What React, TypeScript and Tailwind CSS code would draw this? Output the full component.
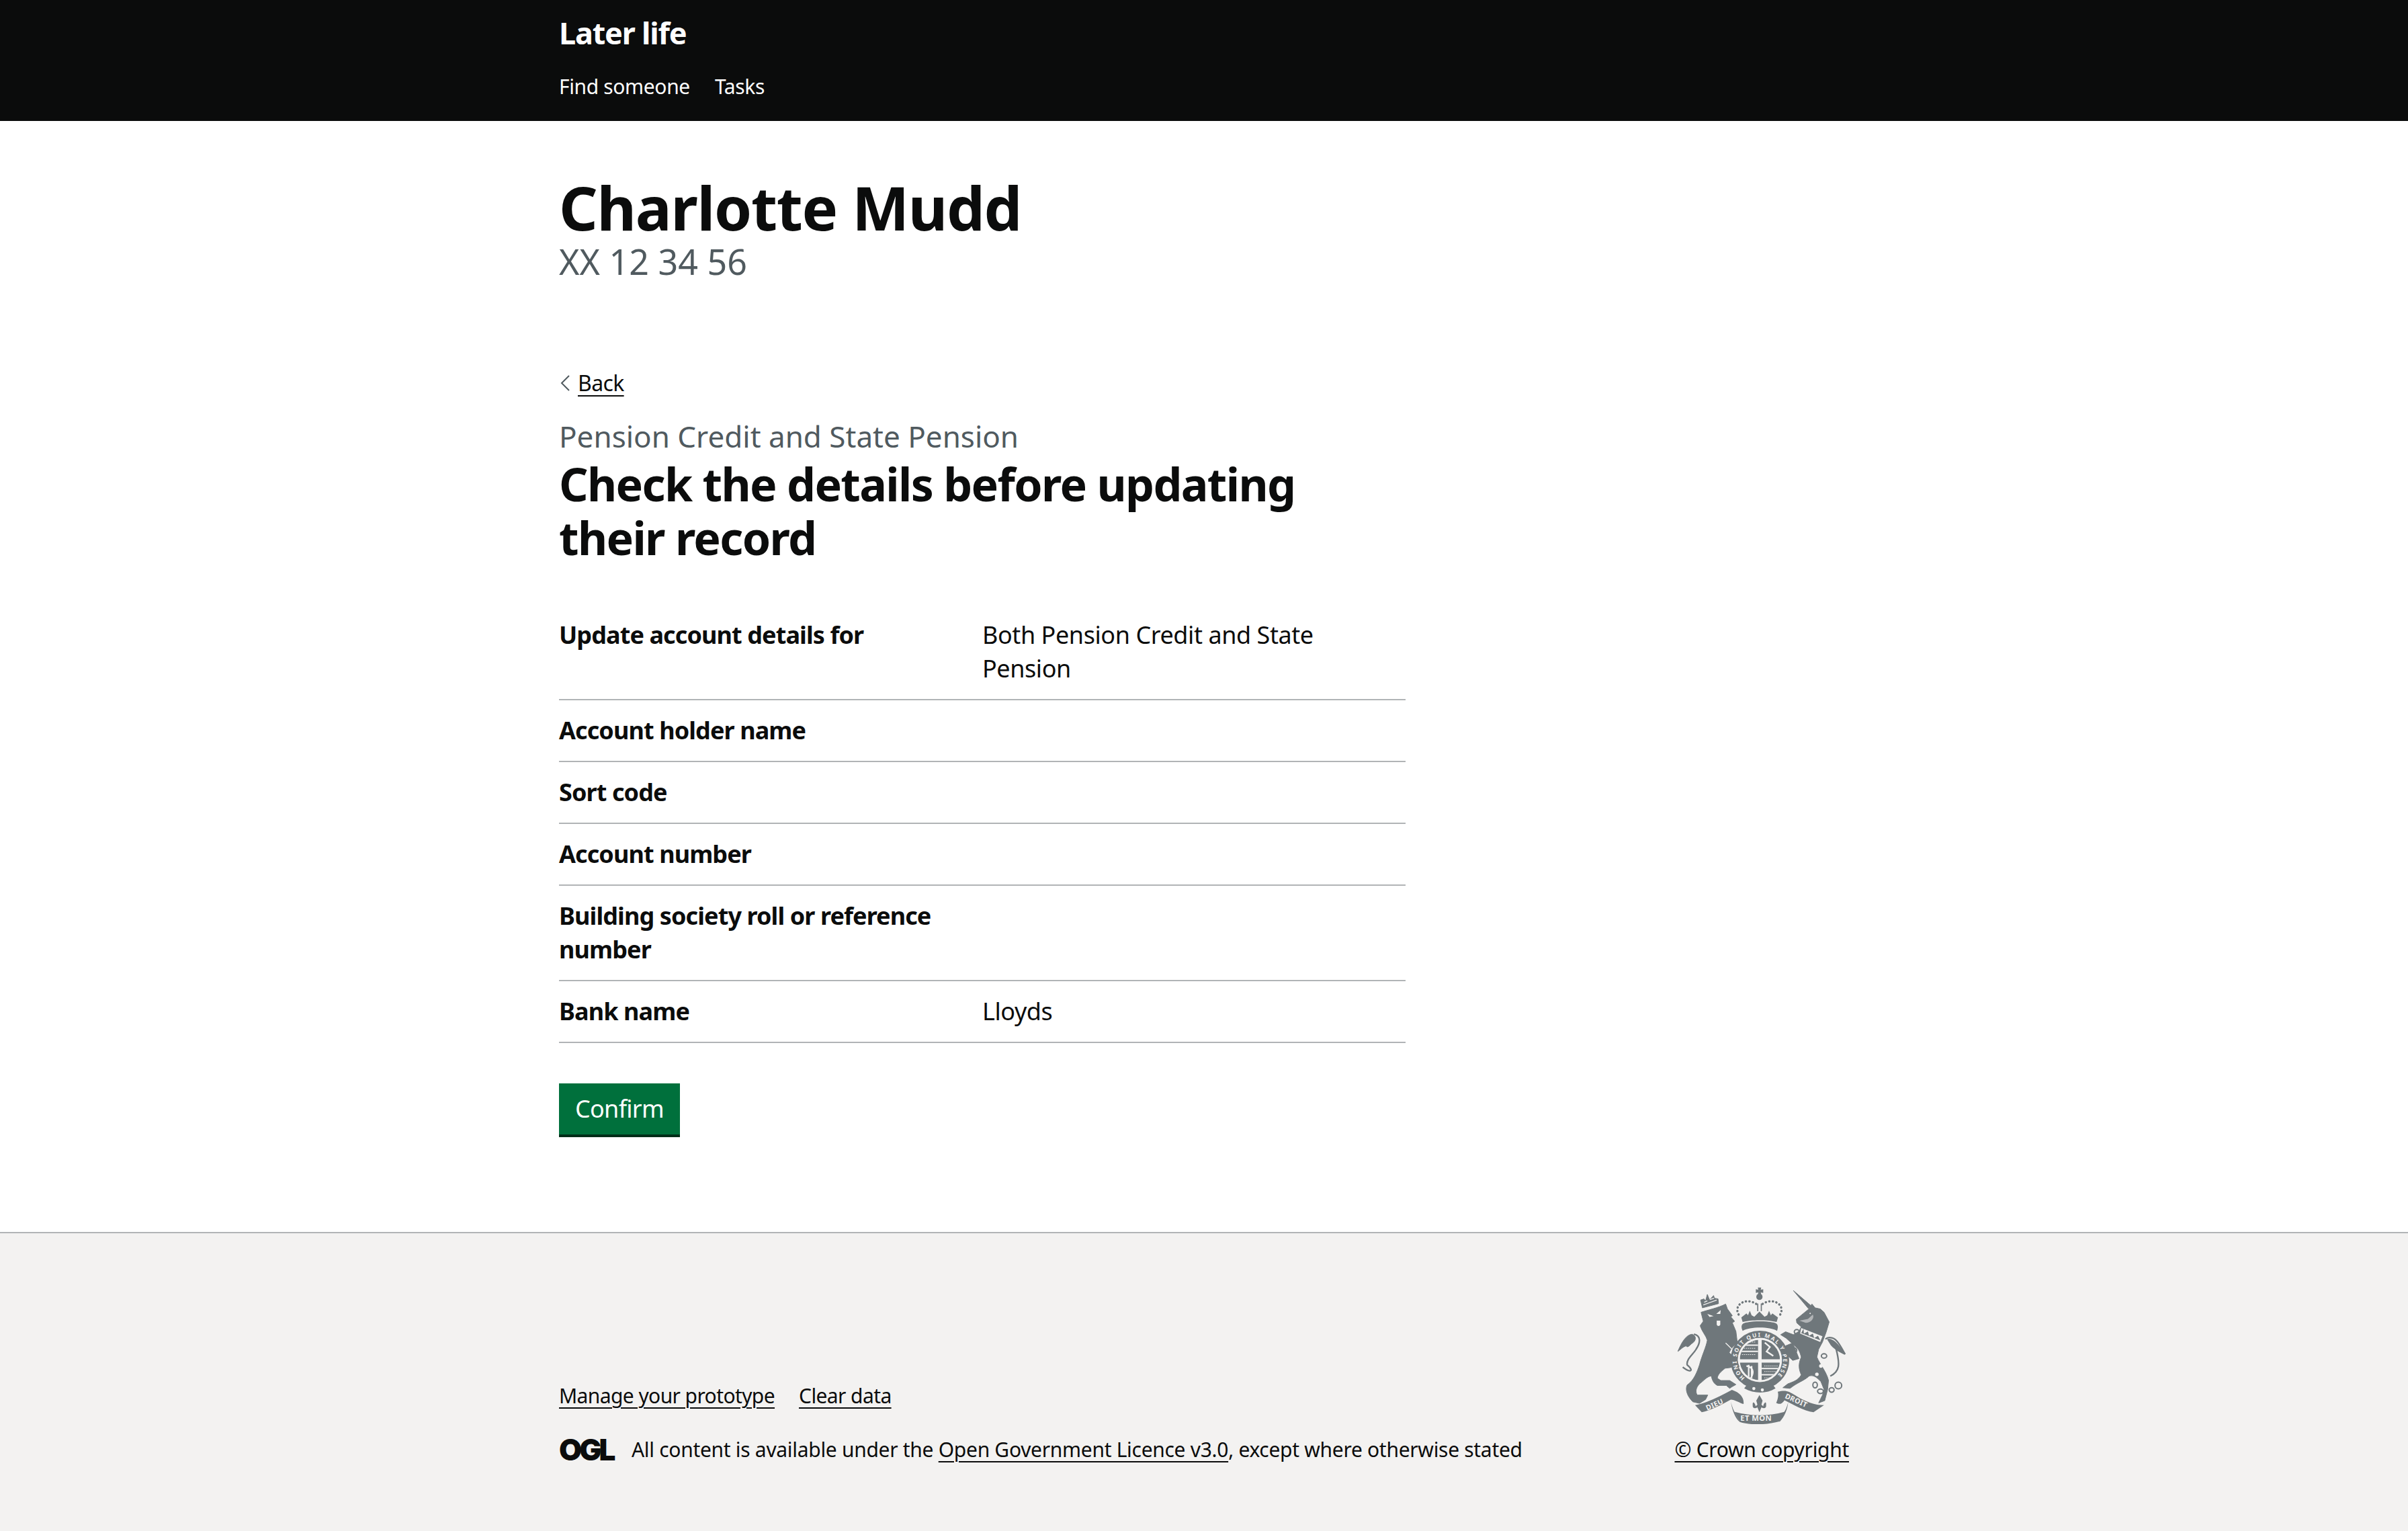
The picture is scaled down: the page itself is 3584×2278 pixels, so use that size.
const rows = [
  { key: "Update account details for", value: "Both Pension Credit and State Pension" },
  { key: "Account holder name", value: "" },
  { key: "Sort code", value: "" },
  { key: "Account number", value: "" },
  { key: "Building society roll or reference number", value: "" },
  { key: "Bank name", value: "Lloyds" },
];

function Crest() {
  const ink = "#6f777b";
  const bg = "#f3f2f1";
  return (
    <svg width="250" height="204" viewBox="108 72 750 613" className="block" fill={ink}>
      {/* lion */}
      <g stroke={ink} strokeWidth="3" strokeLinejoin="round">
        <path d="M212 185 C240 175 290 165 322 148 L330 170 L352 200 L345 205 L362 225 L352 232 L368 270 L374 320 C360 335 345 345 338 365 L350 378 L372 398 L382 428 L362 420 L345 432 L320 435 C300 450 285 465 285 480 L300 490 L340 490 L368 508 L350 518 L340 525 L325 512 L285 512 C270 505 262 490 258 470 C240 470 225 490 205 505 C190 520 185 540 195 555 L242 555 L232 575 L205 592 L175 585 C150 560 140 530 150 510 C180 490 195 450 205 420 C215 380 235 340 240 310 C235 290 215 270 208 245 L222 225 Z" />
        <path d="M172 283 C145 285 125 320 108 360 C125 348 130 340 145 335 C150 345 160 335 170 325 C192 312 192 290 172 283 Z" />
        <path d="M218 165 L210 130 L225 125 L232 135 L240 105 L250 130 L268 110 L272 122 L288 125 L290 146 Z" />
      </g>
      <path d="M130 430 C160 455 185 450 150 420 C145 395 175 375 190 350 C210 320 212 290 180 283" fill="none" stroke={ink} strokeWidth="7" />
      <path d="M240 192 L268 202 L250 206 Z M280 192 L300 175 L298 192 Z" fill={bg} />
      <path d="M282 222 L298 222 L298 240 C295 248 285 248 282 240 Z" fill={bg} />
      <path d="M222 152 L282 130 M226 140 L240 134 M252 128 L270 122" stroke={bg} strokeWidth="4" fill="none" />
      <path d="M322 322 L360 360" stroke={bg} strokeWidth="4" />

      {/* royal crown */}
      <g fill="none" stroke={ink} strokeWidth="10" strokeLinecap="round" strokeDasharray="1 15">
        <path d="M380 195 C355 150 415 115 462 150" />
        <path d="M566 195 C591 150 531 115 484 150" />
      </g>
      <path d="M466 74 L481 74 L479 84 L490 82 L490 98 L479 96 L481 105 L466 105 L468 96 L457 98 L457 82 L468 84 Z" />
      <circle cx="473" cy="116" r="14" />
      <rect x="463" y="146" width="5" height="34" />
      <rect x="479" y="146" width="5" height="34" />
      <path d="M392 208 L415 190 L422 198 L430 178 L438 198 L450 205 L473 182 L496 205 L508 198 L516 178 L524 198 L531 190 L556 208 L550 228 C510 218 436 218 398 228 Z" />
      <path d="M398 268 C385 240 400 232 420 230 C450 224 500 224 530 230 C550 232 562 240 552 268 C520 248 430 248 398 268 Z" />

      {/* garter and shield */}
      <circle cx="475" cy="398" r="115" fill="none" stroke={ink} strokeWidth="32" />
      <path id="garter" d="M408 478 A104 104 0 1 1 542 478" fill="none" />
      <text fontFamily="'Noto Sans', sans-serif" fontWeight="700" fontSize="25" fill={bg}>
        <textPath href="#garter" textLength="490">HONI SOIT QUI MAL Y PENSE</textPath>
      </text>
      <clipPath id="shield">
        <circle cx="475" cy="398" r="90" />
      </clipPath>
      <g clipPath="url(#shield)">
        <rect x="385" y="305" width="82" height="90" />
        <rect x="483" y="305" width="82" height="90" />
        <rect x="385" y="410" width="82" height="90" />
        <rect x="483" y="410" width="82" height="90" />
        <path d="M385 332 H467 M385 360 H467 M483 436 H565 M483 464 H565" stroke={bg} strokeWidth="6" />
        <path d="M395 318 H455 M395 346 H455 M395 374 H455 M495 425 H555 M495 450 H555 M495 478 H555" stroke={bg} strokeWidth="3" strokeDasharray="5 4" />
        <path d="M497 320 L520 340 L505 360 L535 380 M415 425 C450 430 450 460 430 485 M425 420 V480 M438 425 V480" fill="none" stroke={bg} strokeWidth="7" />
      </g>
      <path d="M405 525 C450 550 505 550 545 525 L530 505 C500 520 450 520 420 505 Z" />
      <circle cx="448" cy="526" r="7" fill={bg} />
      <circle cx="486" cy="532" r="7" fill={bg} />

      {/* unicorn */}
      <g stroke={ink} strokeWidth="3" strokeLinejoin="round">
        <path d="M625 88 L703 155 L692 168 Z" />
        <path d="M638 216 L660 198 L692 172 L708 148 L722 165 L745 170 L762 185 L785 228 L772 272 L755 318 L738 350 L730 385 C745 420 775 455 782 490 L778 530 L765 580 L738 590 L755 555 L762 530 L748 495 C725 470 710 465 695 470 C675 490 640 500 610 525 L578 522 L600 505 C625 495 645 490 660 465 C650 440 645 420 660 385 C655 365 650 355 642 345 L612 318 L592 300 L568 285 L590 272 L625 285 L650 270 L660 250 L640 232 Z" />
        <path d="M590 335 L622 322 L650 392 L622 400 L590 370 Z" />
      </g>
      <path d="M660 255 L755 292 L745 318 L655 280 Z" fill={bg} />
      <path d="M670 258 L672 280 L690 270 L695 290 L712 280 L718 300 L735 290 L745 310 L660 278 Z" />
      <path d="M768 305 C775 298 785 295 800 300 C820 305 838 340 856 372 C840 362 826 360 815 345 C835 420 832 450 790 470" fill="none" stroke={ink} strokeWidth="7" />
      <path d="M775 305 C800 295 835 335 856 372 C830 362 812 355 792 332 Z" />
      <circle cx="748" cy="425" r="8" fill={bg} />
      <circle cx="730" cy="462" r="8" fill={bg} />
      <circle cx="700" cy="190" r="3" fill={bg} />
      <path d="M652 222 L690 215 L712 195 C720 210 705 232 680 232 Z" fill={bg} opacity="0.5" />
      <g fill="none" stroke={ink} strokeWidth="6">
        <ellipse cx="640" cy="272" rx="11" ry="10" />
        <ellipse cx="628" cy="355" rx="12" ry="11" />
        <ellipse cx="762" cy="380" rx="12" ry="10" />
        <ellipse cx="722" cy="510" rx="10" ry="13" />
        <ellipse cx="746" cy="538" rx="13" ry="10" />
        <ellipse cx="796" cy="532" rx="11" ry="10" />
        <circle cx="826" cy="512" r="15" />
      </g>

      {/* motto ribbon */}
      <path d="M185 600 C240 590 300 560 350 532 C390 545 405 570 402 595 C385 590 362 575 345 575 C300 600 250 625 215 632 Z" />
      <path d="M362 630 C440 650 510 650 585 630 L565 672 C500 690 430 690 385 675 Z" />
      <path d="M345 585 C352 610 358 625 365 635 L385 675 C365 660 352 625 345 585 Z M602 585 C595 615 585 630 580 635 L562 675 C585 655 598 620 602 585 Z" />
      <path d="M555 540 C590 532 600 535 640 560 C680 585 720 600 762 600 L715 632 C670 625 620 595 585 578 C570 600 560 595 548 590 C555 575 560 555 555 540 Z" />
      <text fontFamily="'Noto Sans', sans-serif" fontWeight="700" fontSize="34" fill={bg} x="388" y="671" letterSpacing="1">ET MON</text>
      <text fontFamily="'Noto Sans', sans-serif" fontWeight="700" fontSize="32" fill={bg} transform="rotate(-24 240 624)" x="240" y="624" letterSpacing="1">DIEU</text>
      <text fontFamily="'Noto Sans', sans-serif" fontWeight="700" fontSize="32" fill={bg} transform="rotate(24 585 568)" x="585" y="568" letterSpacing="1">DROIT</text>
      <path d="M473 555 L487 580 L482 598 L490 605 C492 590 505 578 503 600 C505 612 495 618 482 610 L473 632 L464 610 C451 618 441 612 443 600 C441 578 454 590 456 605 L464 598 L459 580 Z" />
    </svg>
  );
}

export default function App() {
  return (
    <div className="flex min-h-screen flex-col bg-white font-['Noto_Sans',sans-serif] text-[#0b0c0c]">
      <header className="h-[180px] bg-[#0b0c0c] text-white">
        <div className="mx-auto w-[1920px] pt-[19px]">
          <div className="text-[45px] font-bold leading-[60px] tracking-[-0.027em]">Later life</div>
          <nav className="mt-[30px] flex gap-[37px] text-[30px] leading-[40px] tracking-[-0.012em]">
            <a>Find someone</a>
            <a>Tasks</a>
          </nav>
        </div>
      </header>

      <main className="mx-auto w-[1920px] grow pb-[140px]">
        <div className="pt-[83px]">
          <h1 className="text-[90px] font-bold leading-[90px] tracking-[-0.014em]">Charlotte Mudd</h1>
          <p className="mt-[8px] text-[52px] leading-[56px] text-[#505a5f]">XX 12 34 56</p>
        </div>

        <a className="mt-[133px] flex h-10 items-center gap-3 pl-[2px] text-[32px] leading-10 tracking-[-0.02em]">
          <svg width="14" height="24" viewBox="0 0 14 24" fill="none" stroke="#505a5f" strokeWidth="2">
            <path d="M13 1 L2 12 L13 23" />
          </svg>
          <span className="underline decoration-2 underline-offset-[6px]">Back</span>
        </a>

        <div className="mt-[34px] w-[1260px]">
          <p className="text-[44px] leading-[50px] text-[#505a5f]">Pension Credit and State Pension</p>
          <h2 className="mt-[6px] text-[68px] font-bold leading-[80px] tracking-[-0.024em]">
            Check the details before updating their record
          </h2>

          <dl className="mt-[60px]">
            {rows.map((row) => (
              <div key={row.key} className="grid grid-cols-2 border-b-2 border-[#b1b4b6] py-5 text-[36px] leading-[50px]">
                <dt className="pr-10 font-bold tracking-[-0.025em]">{row.key}</dt>
                <dd className="tracking-[-0.012em]">{row.value}</dd>
              </div>
            ))}
          </dl>

          <button className="mt-[60px] h-20 w-[180px] bg-[#00703c] pb-1 text-[36px] leading-[50px] tracking-[-0.02em] text-white shadow-[inset_0_-4px_0_#002d18]">
            Confirm
          </button>
        </div>
      </main>

      <footer className="border-t-2 border-[#b1b4b6] bg-[#f3f2f1] pb-[101px] pt-[80px]">
        <div className="mx-auto flex w-[1920px] items-end justify-between text-[30px] leading-[40px] tracking-[-0.01em]">
          <div>
            <div className="flex gap-9 tracking-[-0.02em]">
              <a className="underline decoration-2 underline-offset-[6px]">Manage your prototype</a>
              <a className="underline decoration-2 underline-offset-[6px]">Clear data</a>
            </div>
            <div className="mt-10 flex items-center">
              <span className="w-[108px] font-['Inter',sans-serif] text-[44px] font-black leading-[40px] tracking-[-0.09em]">OGL</span>
              All content is available under the&nbsp;
              <a className="underline decoration-2 underline-offset-[6px]">Open Government Licence v3.0</a>
              , except where otherwise stated
            </div>
          </div>
          <div className="flex flex-col items-center">
            <Crest />
            <a className="mt-[18px] underline decoration-2 underline-offset-[6px]">© Crown copyright</a>
          </div>
        </div>
      </footer>
    </div>
  );
}
